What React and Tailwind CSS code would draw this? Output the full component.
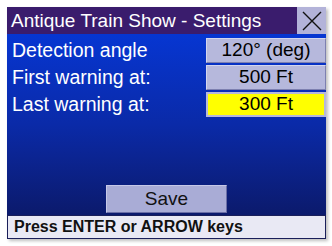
import React from "react";

const rows = [
  { label: "Detection angle", value: "120° (deg)", active: false },
  { label: "First warning at:", value: "500 Ft", active: false },
  { label: "Last warning at:", value: "300 Ft", active: true },
];

const App = () => {
  return (
    <div className="w-[332px] h-[246px] bg-white pt-[7px] pl-[7px] font-['Liberation_Sans',Arial,sans-serif]">
      <div className="w-[319px] h-[232px] flex flex-col shadow-[2px_2px_3px_rgba(0,0,0,0.25)]">
        {/* title bar */}
        <div className="h-[27px] flex bg-[#3a1c6d]">
          <div className="flex-1 pl-[4px] text-white text-[19px] leading-[27px] whitespace-nowrap">
            Antique Train Show - Settings
          </div>
          <div className="w-[29px] h-[27px] bg-[#b3b3d9] flex items-center justify-center">
            <svg width="22" height="22" viewBox="0 0 22 22">
              <path d="M2 2 L20 20 M20 2 L2 20" stroke="#111" strokeWidth="1.4" fill="none" />
            </svg>
          </div>
        </div>

        {/* body */}
        <div className="flex-1 flex flex-col bg-gradient-to-b from-[#0636d2] via-[#0a2aa8] to-[#0b1a6c] pt-[4px]">
          <div className="flex flex-col gap-[2px]">
            {rows.map((r) => (
              <div key={r.label} className="flex items-center h-[25px]">
                <div className="flex-1 pl-[5px] text-white text-[19.5px] whitespace-nowrap">{r.label}</div>
                <div
                  className={
                    r.active
                      ? "w-[120px] h-[25px] bg-[#ffff00] border-2 border-[#b6b8dc] flex items-center justify-center text-black text-[19px]"
                      : "w-[120px] h-[25px] bg-[#b6b8dc] border border-t-[#d4d6ee] border-l-[#d4d6ee] border-b-[#7d80b0] border-r-[#7d80b0] flex items-center justify-center text-black text-[19px]"
                  }
                >
                  {r.value}
                </div>
              </div>
            ))}
          </div>
          <div className="flex-1" />
          <div className="flex justify-center pb-[2px]">
            <div className="w-[121px] h-[28px] bg-[#a9acd6] border border-t-[#c6c8e8] border-l-[#c6c8e8] border-b-[#6a6ea6] border-r-[#6a6ea6] flex items-center justify-center text-[#111] text-[19px]">
              Save
            </div>
          </div>
        </div>

        {/* status bar */}
        <div className="h-[24px] bg-[#e9e9f4] border border-[#1a1f5a] flex items-center pl-[6px] text-[#111] text-[16px] font-bold whitespace-nowrap">
          Press ENTER or ARROW keys
        </div>
      </div>
    </div>
  );
};

export default App;
